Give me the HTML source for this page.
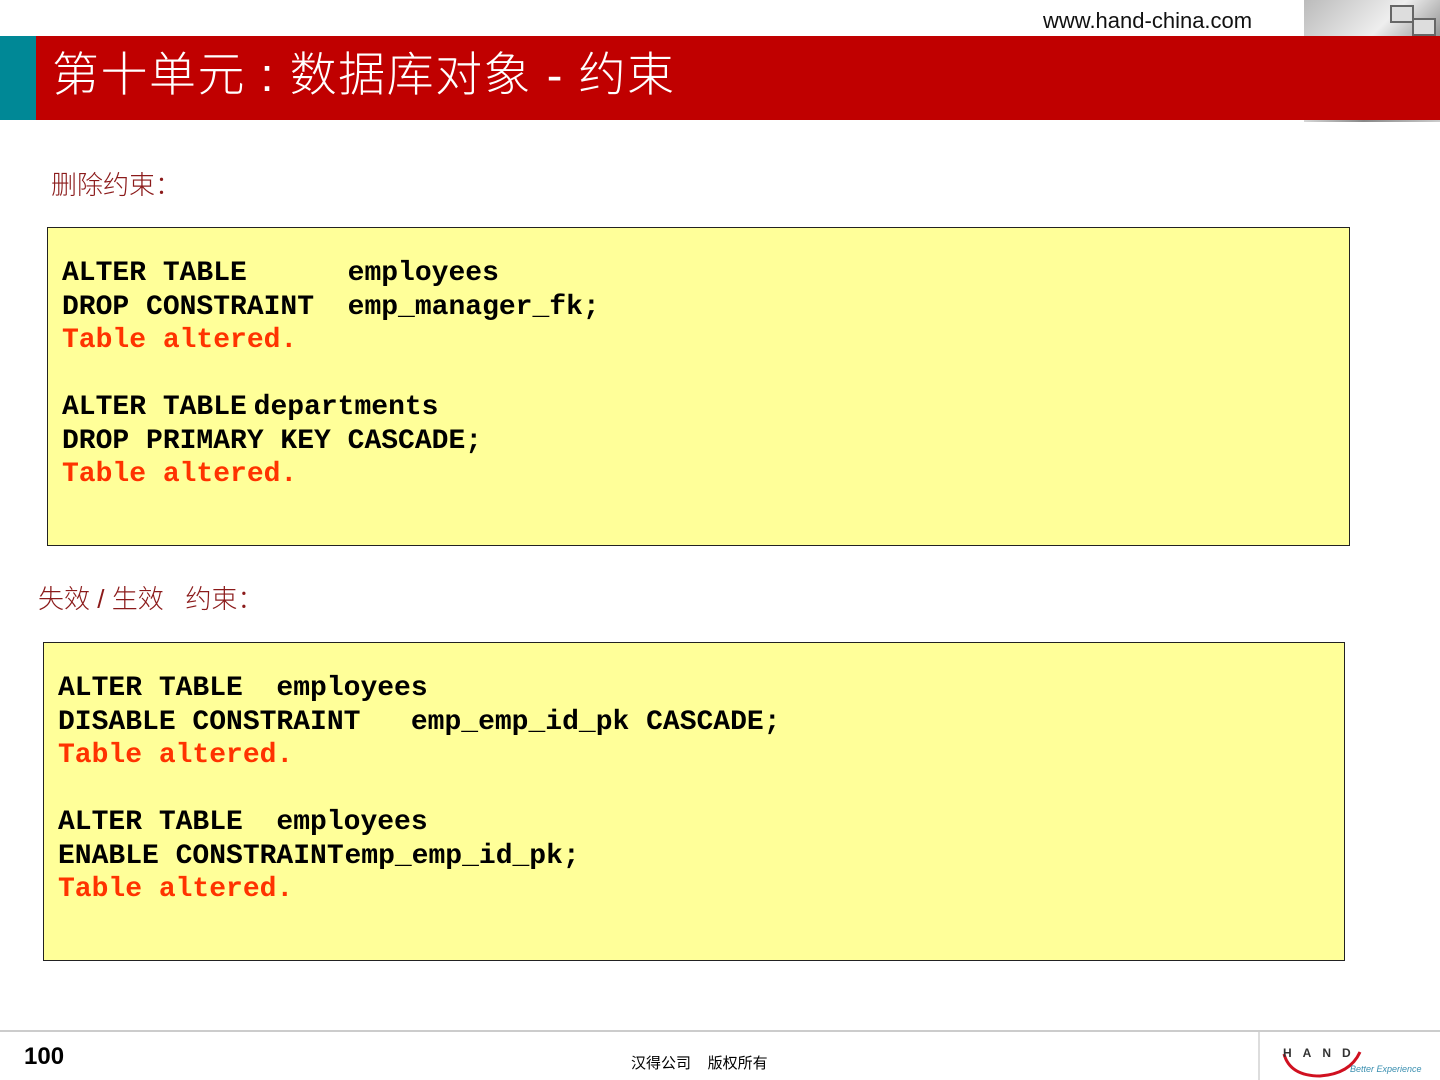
<!DOCTYPE html>
<html><head><meta charset="utf-8"><style>
body{margin:0;width:1440px;height:1080px;position:relative;background:#fff;overflow:hidden;font-family:"Liberation Sans","Noto Sans CJK SC",sans-serif}
.abs{position:absolute}
.code{position:absolute;background:#ffff99;border:1.5px solid #222;box-sizing:border-box;font-family:"Liberation Mono",monospace;font-weight:bold;font-size:28px;line-height:33.5px;color:#000;white-space:pre}
.r{color:#ff3300}
.h{color:#8b1a1a;font-size:26px;font-weight:300}
</style></head><body>
<div class="abs" style="left:1043px;top:8px;font-size:22px;color:#111">www.hand-china.com</div>
<div class="abs" style="left:1304px;top:0;width:136px;height:122px;background:linear-gradient(135deg,#bbb,#eee 40%,#888 70%,#ccc)"></div>
<div class="abs" style="left:1390px;top:5px;width:20px;height:14px;background:#ddd;border:2px solid #666"></div>
<div class="abs" style="left:1412px;top:18px;width:20px;height:14px;background:#ddd;border:2px solid #666"></div>
<div class="abs" style="left:0;top:36px;width:36px;height:84px;background:#008896"></div>
<div class="abs" style="left:36px;top:36px;width:1404px;height:84px;background:#c00000"></div>
<div class="abs" style="left:52px;top:45px;font-size:47px;color:#fff;line-height:60px;white-space:pre;font-weight:300;letter-spacing:1.5px">第十单元 : 数据库对象 <b>-</b> 约束</div>
<div class="abs h" style="left:51px;top:165px">删除约束：</div>
<div class="code" style="left:47px;top:227px;width:1303px;height:319px;padding:29px 0 0 14px">ALTER TABLE      employees
DROP CONSTRAINT  emp_manager_fk;
<span class="r">Table altered.</span>

ALTER TABLE<span style="letter-spacing:-10px"> </span>departments
DROP PRIMARY KEY CASCADE;
<span class="r">Table altered.</span></div>
<div class="abs h" style="left:38px;top:579px;white-space:pre">失效 <b style="font-family:'Liberation Sans'">/</b> 生效   约束：</div>
<div class="code" style="left:43px;top:642px;width:1302px;height:319px;padding:29px 0 0 14px">ALTER TABLE  employees
DISABLE CONSTRAINT   emp_emp_id_pk CASCADE;
<span class="r">Table altered.</span>

ALTER TABLE  employees
ENABLE CONSTRAINT<span style="letter-spacing:-16px"> </span>emp_emp_id_pk;
<span class="r">Table altered.</span></div>
<div class="abs" style="left:0;top:1030px;width:1440px;height:2px;background:#ccc"></div>
<div class="abs" style="left:1258px;top:1032px;width:2px;height:48px;background:#ddd"></div>
<div class="abs" style="left:24px;top:1043px;font-size:24px;font-weight:bold">100</div>
<div class="abs" style="left:631px;top:1052px;font-size:15px">汉得公司&nbsp;&nbsp;&nbsp; 版权所有</div>
<svg class="abs" style="left:1280px;top:1040px" width="160" height="40">
<path d="M4 14 Q10 36 40 36 Q70 34 80 12" fill="none" stroke="#d01020" stroke-width="3"/>
</svg>
<div class="abs" style="left:1283px;top:1046px;font-size:12px;font-weight:bold;letter-spacing:11px;color:#333">HAND</div>
<div class="abs" style="left:1350px;top:1064px;font-size:9px;font-style:italic;color:#3a8fb0">Better Experience</div>
</body></html>
